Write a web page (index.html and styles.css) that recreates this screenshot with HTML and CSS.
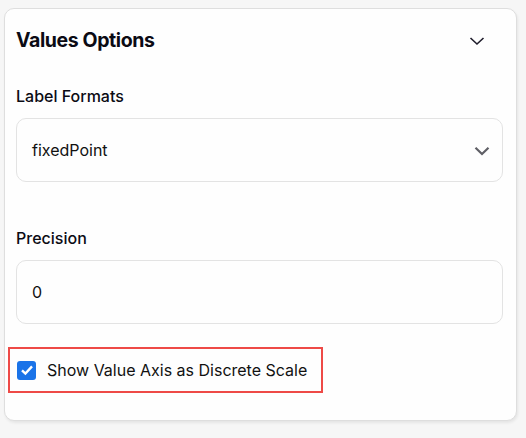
FILE: index.html
```html
<!DOCTYPE html>
<html>
<head>
<meta charset="utf-8">
<link rel="stylesheet" href="styles.css">
</head>
<body>
<div class="card">
  <div class="header">
    <h2 class="title">Values Options</h2>
    <svg class="hchev" width="16" height="10" viewBox="0 0 16 10"><path d="M1.5 2 L8 8 L14.5 2" fill="none" stroke="#1f1d2b" stroke-width="1.6"/></svg>
  </div>
  <div class="field">
    <div class="label">Label Formats</div>
    <div class="box select">
      <span>fixedPoint</span>
      <svg width="16" height="10" viewBox="0 0 16 10"><path d="M1.5 1.8 L8 8 L14.5 1.8" fill="none" stroke="#5f5f66" stroke-width="2.2"/></svg>
    </div>
  </div>
  <div class="field precision">
    <div class="label">Precision</div>
    <div class="box"><span>0</span></div>
  </div>
  <div class="check">
    <span class="cb"><svg width="14" height="12" viewBox="0 0 14 12"><path d="M2 6.3 L5.4 9.6 L12 2.4" fill="none" stroke="#fff" stroke-width="2.4"/></svg></span>
    <span class="ctext">Show Value Axis as Discrete Scale</span>
  </div>
</div>
</body>
</html>
```
FILE: styles.css
```css
html, body { margin: 0; padding: 0; }
body {
  background: #f6f6f6;
  font-family: Inter, "Noto Sans", sans-serif;
  color: #111;
  width: 526px;
  height: 438px;
  overflow: hidden;
}
.card {
  margin: 8px 0 0 4px;
  background: #fefefe;
  border: 1px solid #dedede;
  border-radius: 10px;
  box-shadow: 1px 2px 3px rgba(0,0,0,0.07);
  padding: 0 13px 0 11px;
  box-sizing: border-box;
  width: 513px;
  height: 413px;
}
.header {
  display: flex;
  align-items: center;
  justify-content: space-between;
  height: 62px;
  padding-right: 18px;
}
.title {
  margin: 0;
  font-size: 19.5px;
  font-weight: 700;
  letter-spacing: -0.4px;
  color: #0b0b14;
}
.hchev { margin-top: 2px; }
.label {
  font-size: 16px;
  font-weight: 500;
  color: #0b0b14;
  height: 24px;
  line-height: 24px;
  margin-top: 13px;
}
.box {
  margin-top: 10px;
  height: 64px;
  border: 1px solid #e3e3e3;
  border-radius: 10px;
  box-sizing: border-box;
  display: flex;
  align-items: center;
  justify-content: space-between;
  padding: 0 12px 0 15px;
  font-size: 16px;
  color: #111;
}
.select svg { margin-top: 1px; }
.precision .label { margin-top: 44px; }
.precision .box { margin-top: 10px; }
.check {
  display: inline-flex;
  align-items: center;
  margin: 23px 0 0 -8px;
  height: 46px;
  box-sizing: border-box;
  border: 2px solid #ee4a47;
  padding: 0 14px 0 7px;
}
.cb {
  width: 19px;
  height: 19px;
  border-radius: 3px;
  background: #1a73e8;
  display: flex;
  align-items: center;
  justify-content: center;
}
.ctext {
  margin-left: 11px;
  font-size: 16px;
  color: #111;
}
```
